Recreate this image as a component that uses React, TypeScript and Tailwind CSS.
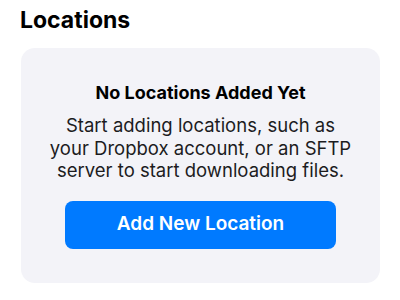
export default function App() {
  return (
    <div
      className="w-[400px] h-[300px] bg-white overflow-hidden"
      style={{ fontFamily: 'Inter, "Noto Sans", sans-serif' }}
    >
      <h1 className="pl-5 pt-[6px] text-[23px] leading-[28px] font-bold text-black">
        Locations
      </h1>

      {/* Empty state card */}
      <div className="mt-[14px] ml-[21px] w-[359px] rounded-[14px] bg-[#f3f3f8] pt-[34px] pb-[34px] flex flex-col items-center text-center">
        <div className="text-[18px] leading-[22px] font-bold text-black">
          No Locations Added Yet
        </div>
        <p className="mt-[10px] text-[18.5px] leading-[22.5px] text-[#1c1c1e] whitespace-nowrap">
          Start adding locations, such as
          <br />
          your Dropbox account, or an SFTP
          <br />
          server to start downloading files.
        </p>
        <button
          type="button"
          className="mt-[19px] w-[271px] h-[48px] rounded-[8px] bg-[#007aff] text-white text-[19px] font-semibold"
        >
          Add New Location
        </button>
      </div>
    </div>
  )
}
